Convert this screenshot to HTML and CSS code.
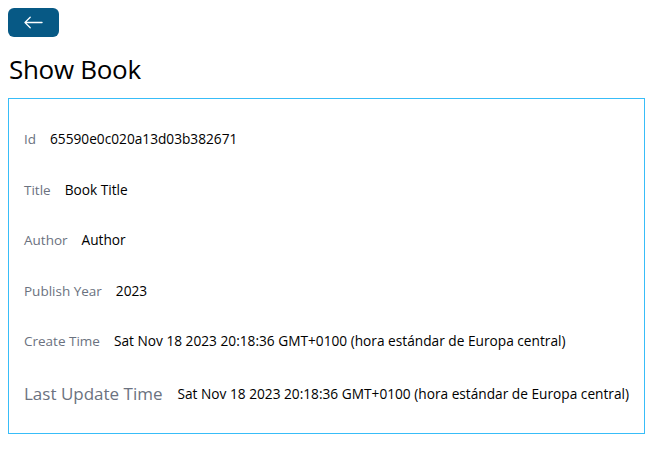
FILE: index.html
```html
<!DOCTYPE html>
<html>
<head>
<meta charset="utf-8">
<link rel="stylesheet" href="styles.css">
</head>
<body>
<div class="page">
  <button class="back" type="button" aria-label="Back">
    <svg class="back-icon" viewBox="0 0 16 16" fill="currentColor"><path fill-rule="evenodd" d="M15 8a.5.5 0 0 0-.5-.5H2.707l3.147-3.146a.5.5 0 1 0-.708-.708l-4 4a.5.5 0 0 0 0 .708l4 4a.5.5 0 0 0 .708-.708L2.707 8.5H14.5A.5.5 0 0 0 15 8z"/></svg>
  </button>
  <h1 class="title">Show Book</h1>
  <div class="card">
    <div class="row"><span class="label">Id</span><span class="value">65590e0c020a13d03b382671</span></div>
    <div class="row"><span class="label">Title</span><span class="value">Book Title</span></div>
    <div class="row"><span class="label">Author</span><span class="value">Author</span></div>
    <div class="row"><span class="label">Publish Year</span><span class="value">2023</span></div>
    <div class="row"><span class="label">Create Time</span><span class="value">Sat Nov 18 2023 20:18:36 GMT+0100 (hora estándar de Europa central)</span></div>
    <div class="row row-xl"><span class="label label-xl">Last Update Time</span><span class="value">Sat Nov 18 2023 20:18:36 GMT+0100 (hora estándar de Europa central)</span></div>
  </div>
</div>
</body>
</html>
```
FILE: styles.css
```css
html, body {
  margin: 0;
  padding: 0;
  background: #ffffff;
}
body {
  font-family: "Open Sans", "Noto Sans", sans-serif;
  color: #000000;
}
.page {
  padding: 8px;
  display: flex;
  flex-direction: column;
  align-items: flex-start;
}
.back {
  display: flex;
  align-items: center;
  justify-content: center;
  width: 51px;
  height: 29px;
  padding: 0;
  border: none;
  border-radius: 6px;
  background: #075985;
  color: #ffffff;
  cursor: pointer;
}
.back-icon {
  width: 21px;
  height: 21px;
}
.title {
  margin: 16px 0 13px 1px;
  font-size: 26px;
  font-weight: 400;
  line-height: 32px;
  letter-spacing: -0.3px;
}
.card {
  display: flex;
  flex-direction: column;
  border: 1px solid #38bdf8;
  padding: 15px 15px 13.5px 15px;
}
.row {
  display: flex;
  align-items: center;
  margin: 16px 0;
  line-height: 18.5px;
}
.row-xl {
  line-height: 21px;
}
.label {
  font-size: 13.5px;
  color: #6b7280;
  margin-right: 14px;
}
.label-xl {
  font-size: 17px;
  font-weight: 400;
  margin-right: 15px;
}
.value {
  font-size: 13.7px;
}
```
